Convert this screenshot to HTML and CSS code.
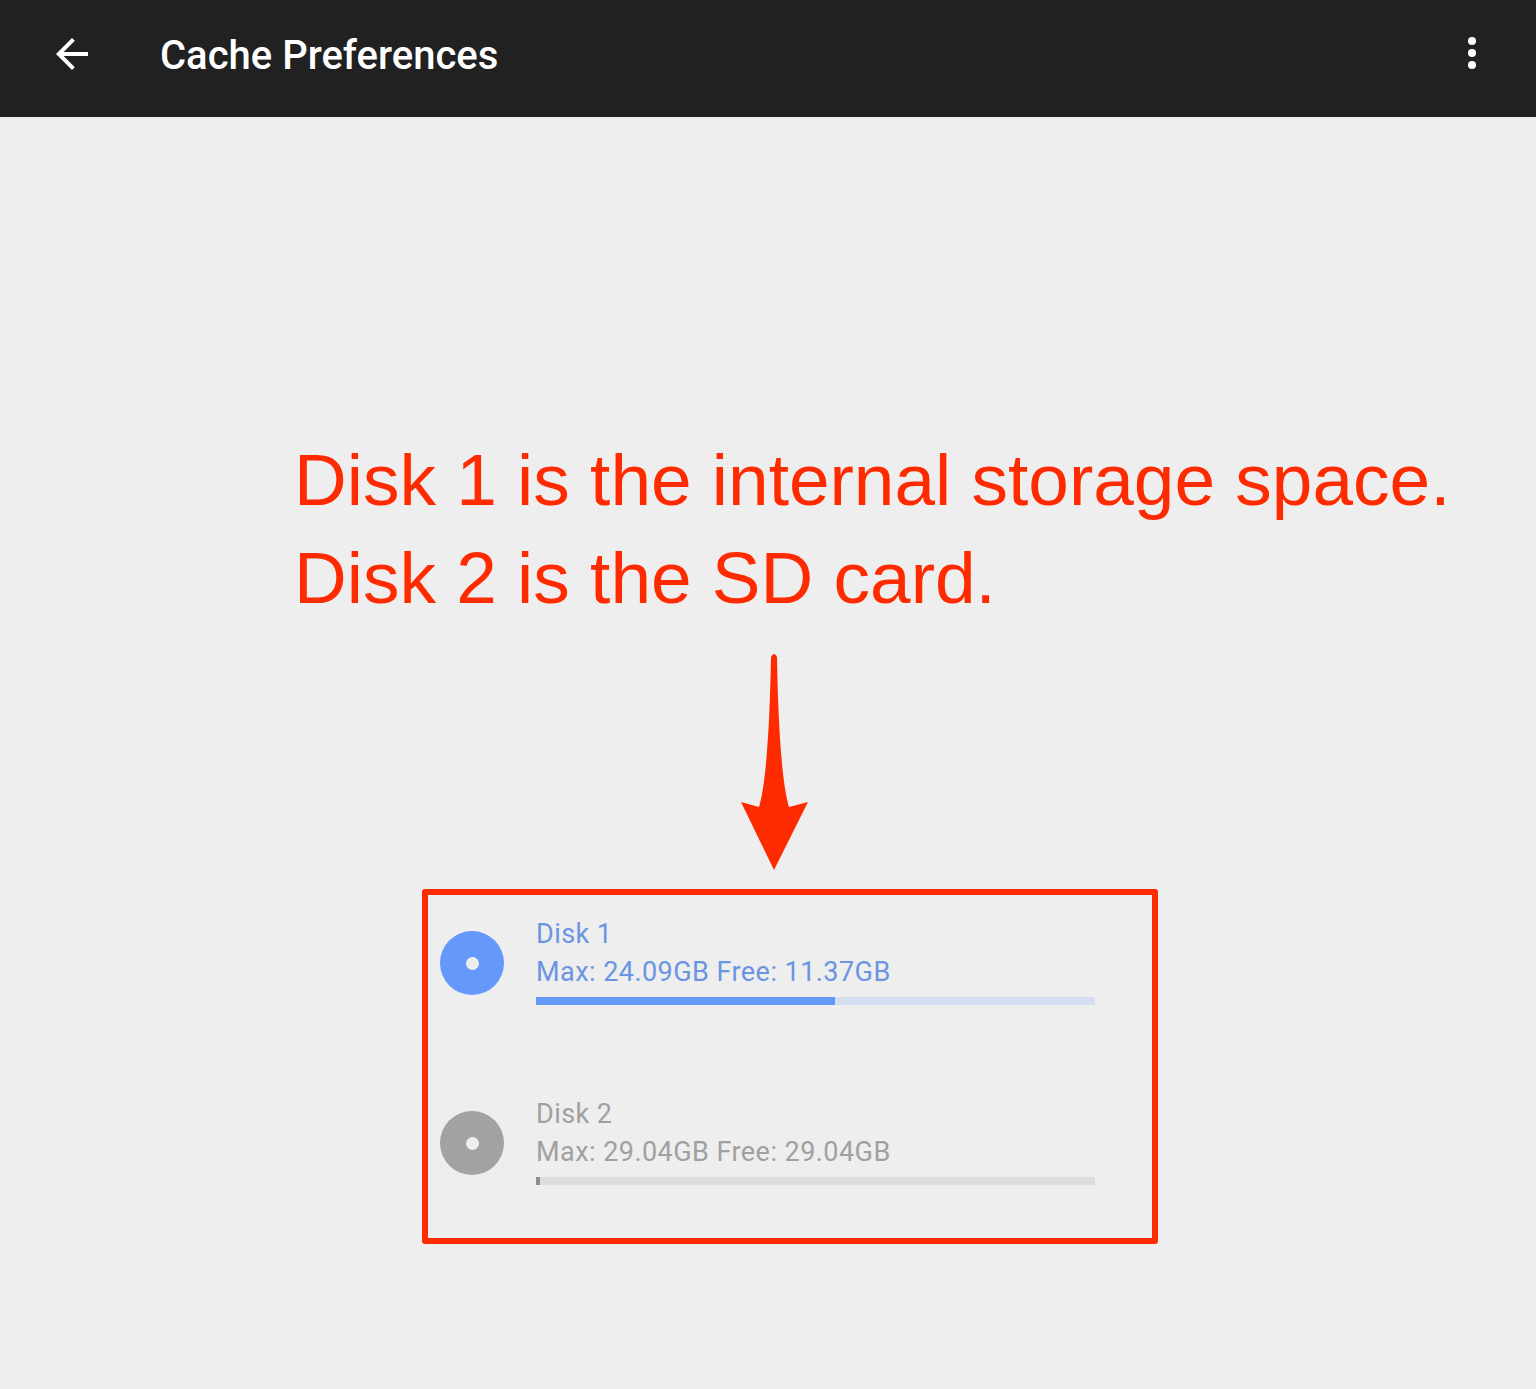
FILE: index.html
```html
<!DOCTYPE html>
<html>
<head>
<meta charset="utf-8">
<title>Cache Preferences</title>
<link rel="stylesheet" href="styles.css">
</head>
<body>
<header class="appbar">
  <svg class="appbar-back" viewBox="0 0 24 24"><path d="M20 11H7.83l5.59-5.59L12 4l-8 8 8 8 1.41-1.41L7.83 13H20v-2z" fill="#fff"/></svg>
  <h1 class="appbar-title">Cache Preferences</h1>
  <svg class="appbar-more" viewBox="0 0 24 24"><circle cx="12" cy="6" r="2" fill="#fff"/><circle cx="12" cy="12" r="2" fill="#fff"/><circle cx="12" cy="18" r="2" fill="#fff"/></svg>
</header>
<main class="content">
  <p class="note">Disk 1 is the internal storage space.<br>Disk 2 is the SD card.</p>
  <svg class="pointer" viewBox="0 0 67 217" width="67" height="217"><path d="M30 4 Q33 -2 36 4 C37 60 40 128 48 154 L67 149 L33 217 L0 149 L18 154 C26 128 29 60 30 4 Z" fill="#ff2b00"/></svg>
  <section class="disks">
    <div class="disk disk-active">
      <div class="disk-icon"><span class="disk-hole"></span></div>
      <div class="disk-info">
        <div class="disk-name">Disk 1</div>
        <div class="disk-size">Max: 24.09GB Free: 11.37GB</div>
        <div class="disk-bar"><div class="disk-fill" style="width:53.4%"></div></div>
      </div>
    </div>
    <div class="disk disk-inactive">
      <div class="disk-icon"><span class="disk-hole"></span></div>
      <div class="disk-info">
        <div class="disk-name">Disk 2</div>
        <div class="disk-size">Max: 29.04GB Free: 29.04GB</div>
        <div class="disk-bar"><div class="disk-fill" style="width:0.7%"></div></div>
      </div>
    </div>
  </section>
</main>
</body>
</html>
```
FILE: styles.css
```css
html, body {
  margin: 0;
  padding: 0;
  background: #eeeeee;
}
body {
  font-family: Roboto, "Noto Sans", sans-serif;
  min-height: 1389px;
}
.appbar {
  display: flex;
  align-items: flex-start;
  box-sizing: border-box;
  height: 117px;
  padding-top: 30px;
  background: #212121;
}
.appbar-back {
  width: 48px;
  height: 48px;
  margin-left: 48px;
  flex: none;
}
.appbar-title {
  margin: 2px 0 0 64px;
  font-size: 40px;
  line-height: 48px;
  font-weight: 500;
  color: #ffffff;
}
.appbar-more {
  width: 48px;
  height: 48px;
  margin: -1px 40px 0 auto;
  flex: none;
}
.content {
  display: flex;
  flex-direction: column;
  align-items: flex-start;
}
.note {
  margin: 314px 0 0 294px;
  font-family: "Liberation Sans", Arial, sans-serif;
  font-size: 73px;
  line-height: 98px;
  color: #ff2b00;
}
.pointer {
  display: block;
  margin: 26px 0 0 741px;
}
.disks {
  box-sizing: border-box;
  width: 736px;
  height: 355px;
  margin: 19px 0 0 422px;
  padding: 20px 0 0 12px;
  border: 6px solid #ff2b00;
  border-radius: 3px;
  display: flex;
  flex-direction: column;
  gap: 90px;
}
.disk {
  display: flex;
  align-items: flex-start;
}
.disk-icon {
  width: 64px;
  height: 64px;
  margin-top: 16px;
  border-radius: 50%;
  display: flex;
  align-items: center;
  justify-content: center;
  flex: none;
}
.disk-hole {
  width: 13px;
  height: 13px;
  border-radius: 50%;
  background: #eeeeee;
}
.disk-info {
  margin-left: 32px;
  width: 559px;
}
.disk-name, .disk-size {
  font-size: 27px;
  line-height: 38px;
  letter-spacing: 0.45px;
}
.disk-bar {
  height: 8px;
  margin-top: 6px;
}
.disk-fill {
  height: 100%;
}
.disk-active .disk-icon { background: #6598fb; }
.disk-active .disk-name,
.disk-active .disk-size { color: #6b94e2; }
.disk-active .disk-bar { background: #d5def1; }
.disk-active .disk-fill { background: #6597f4; }
.disk-inactive .disk-icon { background: #a2a2a2; }
.disk-inactive .disk-name,
.disk-inactive .disk-size { color: #a0a0a0; }
.disk-inactive .disk-bar { background: #dddddd; }
.disk-inactive .disk-fill { background: #8c8c8c; }
```
